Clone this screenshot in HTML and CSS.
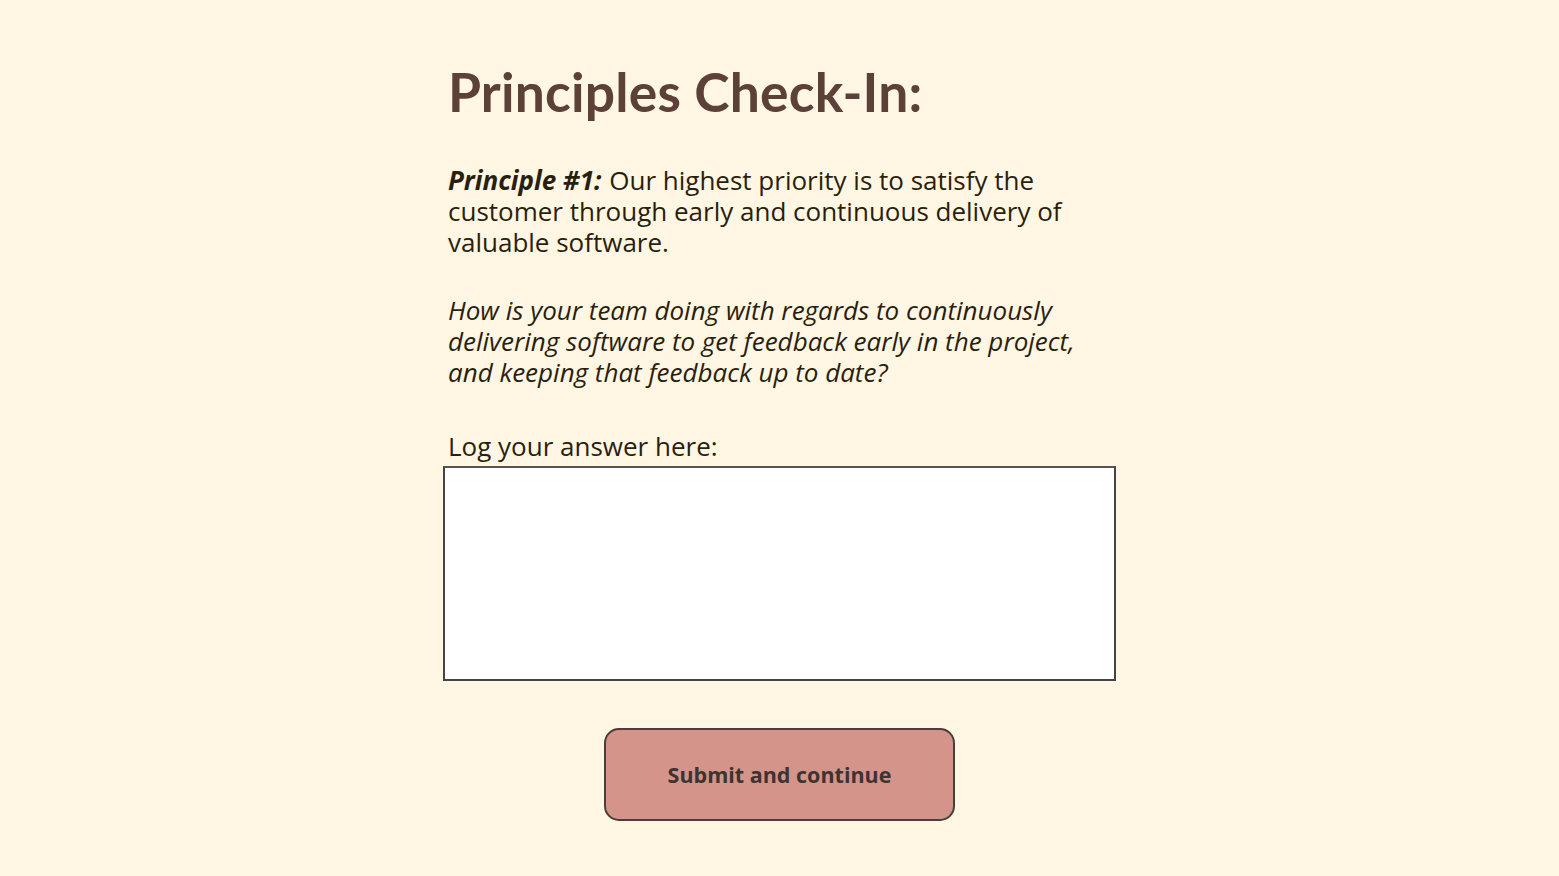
FILE: index.html
```html
<!DOCTYPE html>
<html lang="en">
<head>
<meta charset="utf-8">
<title>Principles Check-In</title>
<link rel="stylesheet" href="styles.css">
</head>
<body>
<main class="page">
  <section class="checkin">
    <h1 class="title">Principles Check-In:</h1>
    <p class="principle"><strong class="tag">Principle #1:</strong> Our highest priority is to satisfy the customer through early and continuous delivery of valuable software.</p>
    <p class="question">How is your team doing with regards to continuously delivering software to get feedback early in the project, and keeping that feedback up to date?</p>
    <label class="label" for="answer">Log your answer here:</label>
    <textarea id="answer" class="answer"></textarea>
    <div class="actions">
      <button class="submit" type="button">Submit and continue</button>
    </div>
  </section>
</main>
</body>
</html>
```

FILE: styles.css
```css
* { box-sizing: border-box; }
html, body { margin: 0; padding: 0; }
body {
  background: #fff6e3;
  font-family: "Open Sans", "Liberation Sans", sans-serif;
  color: #2a1f0c;
  min-height: 876px;
}
.page {
  display: flex;
  justify-content: center;
  padding-top: 58px;
}
.checkin {
  width: 673px;
  display: flex;
  flex-direction: column;
}
.title {
  margin: 0 0 0 5px;
  font-family: Lato, "Open Sans", sans-serif;
  font-weight: 700;
  font-size: 53.4px;
  line-height: 66px;
  color: #5c4139;
  letter-spacing: 0.2px;
}
.principle, .question {
  margin: 0;
  padding-left: 5px;
  padding-right: 36px;
  font-size: 26px;
  line-height: 31px;
}
.principle { margin-top: 41px; }
.tag { font-style: italic; font-weight: 700; margin-right: 1px; }
.question { margin-top: 37px; font-style: italic; }
.label {
  margin-top: 43px;
  padding-left: 5px;
  font-size: 26px;
  line-height: 31px;
}
.answer {
  display: block;
  margin-top: 4px;
  width: 673px;
  height: 215px;
  border: 2px solid #444;
  border-top-color: #555;
  background: #fff;
  resize: none;
  font-family: "Open Sans", sans-serif;
  font-size: 18px;
}
.actions {
  display: flex;
  justify-content: center;
  margin-top: 47px;
}
.submit {
  width: 351px;
  height: 93px;
  background: #d4948a;
  border: 2px solid #4a3e3a;
  border-radius: 15px;
  font-family: "Open Sans", sans-serif;
  font-weight: 700;
  font-size: 21.5px;
  color: #3d3330;
  cursor: pointer;
}
```
